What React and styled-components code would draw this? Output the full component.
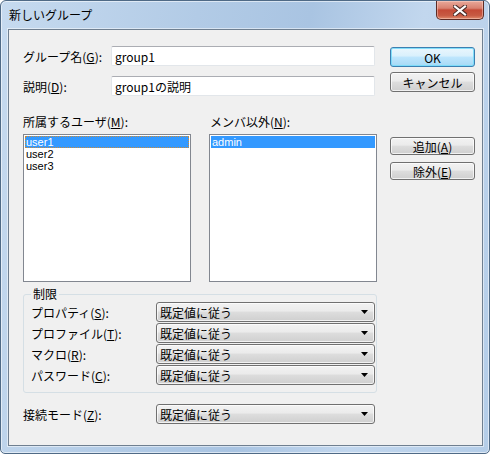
import React from "react";
import styled, { createGlobalStyle } from "styled-components";

const GlobalStyle = createGlobalStyle`
  html, body { margin: 0; padding: 0; background: #ffffff; }
  * { box-sizing: border-box; }
  body {
    font-family: "Noto Sans CJK JP", "Liberation Sans", sans-serif;
    font-size: 12px;
    color: #000;
  }
`;

const Window = styled.div`
  width: 490px;
  height: 454px;
  display: flex;
  flex-direction: column;
  padding: 0 6px 7px 7px;
  border: 1px solid #4f6a86;
  border-radius: 6px 6px 5px 5px;
  background: linear-gradient(
    100deg,
    #c6daef 0%,
    #b2cbe6 35%,
    #a9c4e2 55%,
    #c2d7ee 75%,
    #b4cde8 100%
  );
  box-shadow: inset 0 0 0 1px rgba(255, 255, 255, 0.55);
`;

const TitleBar = styled.div`
  height: 28px;
  display: flex;
  align-items: flex-start;
  justify-content: space-between;
`;

const Title = styled.span`
  padding: 7px 0 0 1px;
  line-height: 14px;
`;

const CloseButton = styled.div`
  width: 48px;
  height: 19px;
  margin-right: -1px;
  display: flex;
  align-items: center;
  justify-content: center;
  border: 1px solid #5d2b24;
  border-top: none;
  border-radius: 0 0 5px 5px;
  background: linear-gradient(
    180deg,
    #e9a99a 0%,
    #d98170 40%,
    #c44a36 50%,
    #c75a43 80%,
    #e08a6b 100%
  );
  box-shadow: inset 0 0 0 1px rgba(255, 220, 210, 0.45);
`;

const Client = styled.div`
  flex: 1;
  display: flex;
  gap: 13px;
  padding: 16px 0 0 14px;
  background: #f0f0f0;
  border: 1px solid #6f7f90;
  box-shadow: 0 0 0 1px rgba(255, 255, 255, 0.5);
`;

const Main = styled.div`
  width: 354px;
  display: flex;
  flex-direction: column;
`;

const FieldRow = styled.div`
  display: flex;
  align-items: center;
  height: 20px;
  & + & {
    margin-top: 10px;
  }
`;

const Label = styled.span`
  width: ${(p) => p.$width || 88}px;
  flex: ${(p) => (p.$grow ? 1 : "none")};
  line-height: 13px;
  white-space: nowrap;
`;

const Key = styled.span`
  text-decoration: underline;
  text-underline-offset: 1px;
`;

const TextInput = styled.div`
  width: 264px;
  height: 20px;
  padding: 0 3px;
  display: flex;
  align-items: center;
  background: #fff;
  border: 1px solid #e2e6ea;
  border-top-color: #abadb3;
  border-radius: 2px;
  white-space: nowrap;
`;

const Lists = styled.div`
  margin-top: 19px;
  display: flex;
  gap: 18px;
`;

const ListColumn = styled.div`
  width: 168px;
  display: flex;
  flex-direction: column;
`;

const ListLabel = styled.span`
  line-height: 13px;
  margin-bottom: 6px;
  padding-left: ${(p) => p.$indent || 0}px;
`;

const ListBox = styled.div`
  height: 148px;
  padding: 1px;
  background: #fff;
  border: 1px solid #828790;
`;

const ListItem = styled.div`
  height: 12px;
  line-height: 12px;
  padding-left: 1px;
  font-family: "Liberation Sans", "Noto Sans CJK JP", sans-serif;
  font-size: 11px;
  white-space: nowrap;
  background: ${(p) => (p.$selected ? "#3399ff" : "transparent")};
  color: ${(p) => (p.$selected ? "#fff" : "#000")};
  outline: ${(p) => (p.$focus ? "1px dotted #c98a3a" : "none")};
  outline-offset: -1px;
`;

const Group = styled.fieldset`
  margin: 6px 0 0;
  padding: 2px 0 7px 7px;
  border: 1px solid #d5dfe5;
  border-radius: 3px;
  display: flex;
  flex-direction: column;
  gap: 1px;
`;

const Legend = styled.legend`
  padding: 0 2px;
  line-height: 12px;
`;

const ComboRow = styled.div`
  display: flex;
  align-items: center;
  height: 20px;
  margin-top: ${(p) => p.$top || 0}px;
`;

const Combo = styled.div`
  width: 219px;
  height: 20px;
  margin-right: ${(p) => p.$right || 0}px;
  display: flex;
  align-items: center;
  justify-content: space-between;
  padding: 0 6px 0 3px;
  border: 1px solid #707070;
  border-radius: 3px;
  background: linear-gradient(
    180deg,
    #f2f2f2 0%,
    #ebebeb 45%,
    #dddddd 50%,
    #cfcfcf 100%
  );
  box-shadow: inset 0 0 0 1px rgba(255, 255, 255, 0.7);
  white-space: nowrap;
`;

const Buttons = styled.div`
  width: 85px;
  padding-top: 1px;
  display: flex;
  flex-direction: column;
`;

const Button = styled.div`
  height: ${(p) => p.$height || 20}px;
  margin-top: ${(p) => p.$top || 0}px;
  display: flex;
  align-items: center;
  justify-content: center;
  border: 1px solid ${(p) => (p.$default ? "#3c7fb1" : "#707070")};
  border-radius: 3px;
  background: ${(p) =>
    p.$default
      ? "linear-gradient(180deg, #eaf6fd 0%, #d9f0fc 45%, #bee6fd 50%, #a7d9f5 100%)"
      : "linear-gradient(180deg, #f2f2f2 0%, #ebebeb 45%, #dddddd 50%, #cfcfcf 100%)"};
  box-shadow: inset 0 0 0 1px
    ${(p) => (p.$default ? "rgba(120, 220, 250, 0.9)" : "rgba(255, 255, 255, 0.7)")};
  line-height: 13px;
  white-space: nowrap;
`;

const Arrow = () => (
  <svg width="7" height="4" viewBox="0 0 7 4">
    <path d="M0 0H7L3.5 4Z" fill="#000" />
  </svg>
);

const CloseGlyph = () => (
  <svg width="14" height="11" viewBox="0 0 14 11">
    <path
      d="M2 1.5L12 9.5M12 1.5L2 9.5"
      stroke="#4a2a26"
      strokeWidth="4.2"
      strokeLinecap="square"
    />
    <path
      d="M2 1.5L12 9.5M12 1.5L2 9.5"
      stroke="#fff"
      strokeWidth="2.2"
      strokeLinecap="square"
    />
  </svg>
);

const limits = [
  ["プロパティ(", "S", "):"],
  ["プロファイル(", "T", "):"],
  ["マクロ(", "R", "):"],
  ["パスワード(", "C", "):"],
];

export default function App() {
  return (
    <>
      <GlobalStyle />
      <Window>
        <TitleBar>
          <Title>新しいグループ</Title>
          <CloseButton>
            <CloseGlyph />
          </CloseButton>
        </TitleBar>
        <Client>
          <Main>
            <FieldRow>
              <Label>
                グループ名(<Key>G</Key>):
              </Label>
              <TextInput>group1</TextInput>
            </FieldRow>
            <FieldRow>
              <Label>
                説明(<Key>D</Key>):
              </Label>
              <TextInput>group1の説明</TextInput>
            </FieldRow>

            <Lists>
              <ListColumn>
                <ListLabel>
                  所属するユーザ(<Key>M</Key>):
                </ListLabel>
                <ListBox>
                  <ListItem $selected $focus>
                    user1
                  </ListItem>
                  <ListItem>user2</ListItem>
                  <ListItem>user3</ListItem>
                </ListBox>
              </ListColumn>
              <ListColumn>
                <ListLabel $indent={1}>
                  メンバ以外(<Key>N</Key>):
                </ListLabel>
                <ListBox>
                  <ListItem $selected>admin</ListItem>
                </ListBox>
              </ListColumn>
            </Lists>

            <Group>
              <Legend>制限</Legend>
              {limits.map(([a, k, b]) => (
                <ComboRow key={k}>
                  <Label $grow>
                    {a}
                    <Key>{k}</Key>
                    {b}
                  </Label>
                  <Combo $right={1}>
                    既定値に従う
                    <Arrow />
                  </Combo>
                </ComboRow>
              ))}
            </Group>

            <ComboRow $top={11}>
              <Label $grow>
                接続モード(<Key>Z</Key>):
              </Label>
              <Combo $right={2}>
                既定値に従う
                <Arrow />
              </Combo>
            </ComboRow>
          </Main>

          <Buttons>
            <Button $default>OK</Button>
            <Button $top={5}>キャンセル</Button>
            <Button $top={45} $height={18}>
              追加(<Key>A</Key>)
            </Button>
            <Button $top={7} $height={18}>
              除外(<Key>E</Key>)
            </Button>
          </Buttons>
        </Client>
      </Window>
    </>
  );
}
